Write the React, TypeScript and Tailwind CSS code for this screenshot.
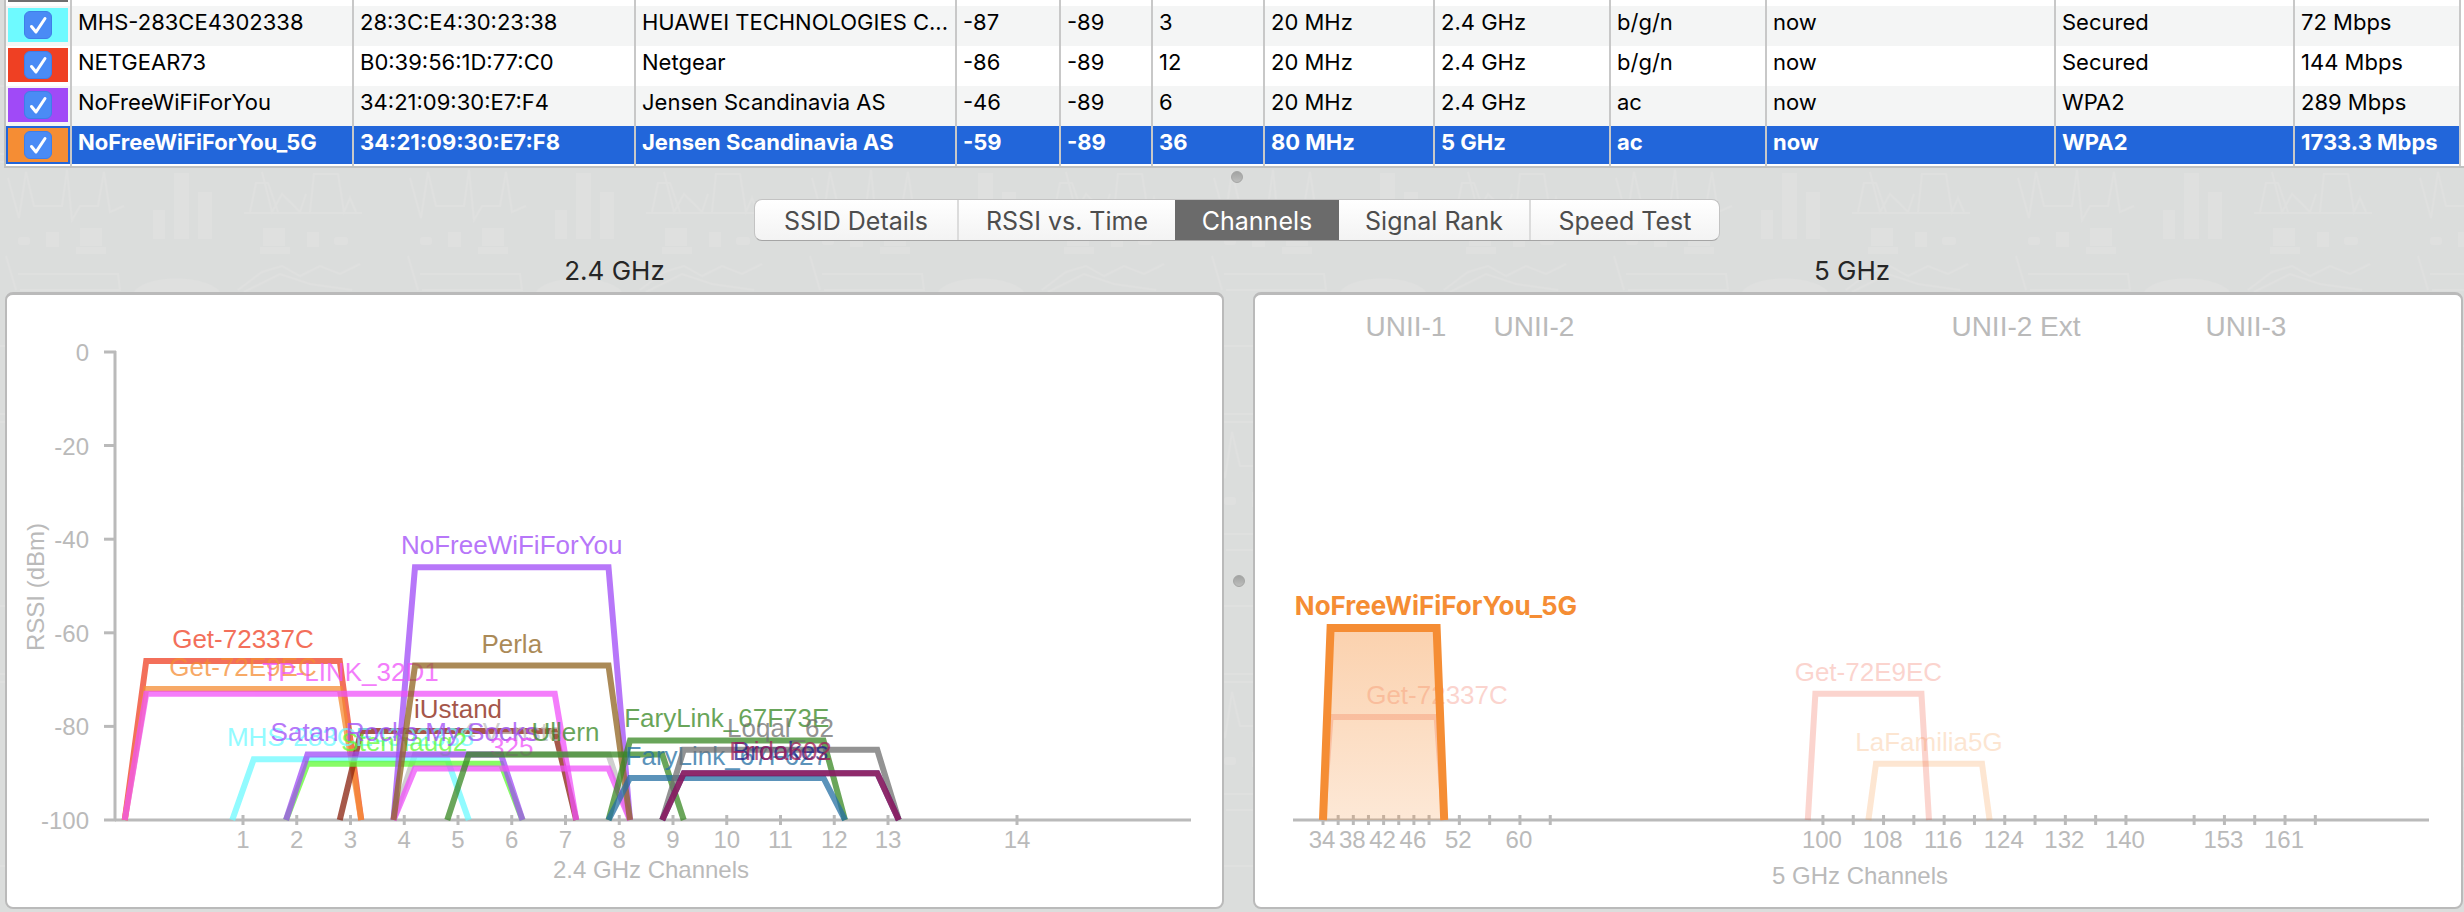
import { useState } from 'react'

interface Network {
  ssid: string
  bssid: string
  vendor: string
  signal: string
  noise: string
  channel: string
  width: string
  band: string
  mode: string
  seen: string
  security: string
  rate: string
  swatch: string
}

interface Trace {
  name: string
  channel: number
  span: number
  rssi: number
  color: string
}

const NETWORKS: Network[] = [
  { ssid: 'MHS-283CE4302338', bssid: '28:3C:E4:30:23:38', vendor: 'HUAWEI TECHNOLOGIES C...', signal: '-87', noise: '-89', channel: '3', width: '20 MHz', band: '2.4 GHz', mode: 'b/g/n', seen: 'now', security: 'Secured', rate: '72 Mbps', swatch: 'bg-[#6efaff]' },
  { ssid: 'NETGEAR73', bssid: 'B0:39:56:1D:77:C0', vendor: 'Netgear', signal: '-86', noise: '-89', channel: '12', width: '20 MHz', band: '2.4 GHz', mode: 'b/g/n', seen: 'now', security: 'Secured', rate: '144 Mbps', swatch: 'bg-[#ef4023]' },
  { ssid: 'NoFreeWiFiForYou', bssid: '34:21:09:30:E7:F4', vendor: 'Jensen Scandinavia AS', signal: '-46', noise: '-89', channel: '6', width: '20 MHz', band: '2.4 GHz', mode: 'ac', seen: 'now', security: 'WPA2', rate: '289 Mbps', swatch: 'bg-[#a04af7]' },
  { ssid: 'NoFreeWiFiForYou_5G', bssid: '34:21:09:30:E7:F8', vendor: 'Jensen Scandinavia AS', signal: '-59', noise: '-89', channel: '36', width: '80 MHz', band: '5 GHz', mode: 'ac', seen: 'now', security: 'WPA2', rate: '1733.3 Mbps', swatch: 'bg-[#f58d34]' },
]

const COLUMNS = [
  'w-[66px]',
  'w-[282px]',
  'w-[282px]',
  'w-[321px]',
  'w-[104px]',
  'w-[92px]',
  'w-[112px]',
  'w-[170px]',
  'w-[176px]',
  'w-[156px]',
  'w-[289px]',
  'w-[239px]',
  'w-[166px]',
]

const TABS = [
  { label: 'SSID Details', width: 'w-[202px]' },
  { label: 'RSSI vs. Time', width: 'w-[218px]' },
  { label: 'Channels', width: 'w-[164px]' },
  { label: 'Signal Rank', width: 'w-[190px]' },
  { label: 'Speed Test', width: 'w-[190px]' },
]

// Drawn in order, later traces on top
const TRACES_24: Trace[] = [
  { name: 'Get-72337C', channel: 1, span: 4, rssi: -66, color: '#ef4023' },
  { name: 'Get-72E9EC', channel: 1, span: 4, rssi: -72, color: '#f58d34' },
  { name: 'iUstand', channel: 5, span: 4, rssi: -81, color: '#88200c' },
  { name: '4 Venste', channel: 6, span: 4, rssi: -86, color: '#bfbfbf' },
  { name: 'MHS-283CE4302338', channel: 3, span: 4, rssi: -87, color: '#6efaff' },
  { name: 'Stenhaug2', channel: 4, span: 4, rssi: -88, color: '#60fa33' },
  { name: 'Satan Rocks My Socks', channel: 4, span: 4, rssi: -86, color: '#a04af7' },
  { name: 'NoFreeWiFiForYou', channel: 6, span: 4, rssi: -46, color: '#a04af7' },
  { name: 'TP-LINK_32D1', channel: 3, span: 8, rssi: -73, color: '#f052fa' },
  { name: '325', channel: 6, span: 4, rssi: -89, color: '#f052fa' },
  { name: 'Perla', channel: 6, span: 4, rssi: -67, color: '#906420' },
  { name: 'Ullern', channel: 7, span: 4, rssi: -86, color: '#388823' },
  { name: 'FaryLink_67F73E', channel: 10, span: 4, rssi: -83, color: '#388823' },
  { name: 'FaryLink_67F627', channel: 10, span: 4, rssi: -91, color: '#2570a4' },
  { name: 'Loqal_62', channel: 11, span: 4, rssi: -85, color: '#6f6f6f' },
  { name: 'Brookes', channel: 11, span: 4, rssi: -90, color: '#1d1d8a' },
  { name: 'Frida602', channel: 11, span: 4, rssi: -90, color: '#a21c58' },
]

const TRACES_5: Trace[] = [
  { name: 'Get-72337C', channel: 42, span: 15, rssi: -78, color: '#ef4023' },
  { name: 'LaFamilia5G', channel: 114, span: 15, rssi: -88, color: '#f58d34' },
  { name: 'Get-72E9EC', channel: 106, span: 15, rssi: -73, color: '#ef4023' },
]

const TICKS_5 = [34, 36, 38, 40, 42, 44, 46, 48, 52, 56, 60, 64, 100, 104, 108, 112, 116, 120, 124, 128, 132, 136, 140, 149, 153, 157, 161, 165]
const LABELS_5 = [34, 38, 42, 46, 52, 60, 100, 108, 116, 124, 132, 140, 153, 161]

const AXIS = '#bababa'
const BASE = 525

const rssiY = (rssi: number) => 57 - rssi * 4.68
const x24 = (channel: number) => (channel === 14 ? 1010 : 236 + (channel - 1) * 53.75)
const x5 = (channel: number) => 68 + (channel - 34) * 7.575

const tracePoints = (x: (channel: number) => number, { channel, span, rssi }: Trace, slope: number) => {
  const y = rssiY(rssi)
  const half = span / 2
  return [
    [x(channel - half - slope), BASE],
    [x(channel - half + slope), y],
    [x(channel + half - slope), y],
    [x(channel + half + slope), BASE],
  ]
    .map((p) => p.join(','))
    .join(' ')
}

function Backdrop() {
  return (
    <svg className="absolute inset-0 w-full h-full" aria-hidden="true">
      <defs>
        <pattern id="doodles" y="168" width="402" height="260" patternUnits="userSpaceOnUse">
          <g fill="#dfe0df">
            <rect x="153" y="42" width="12" height="29" />
            <rect x="174" y="5" width="15" height="66" />
            <rect x="198" y="24" width="14" height="47" />
            <rect x="18" y="69" width="12" height="8" rx="3" />
            <rect x="46" y="64" width="13" height="15" />
            <rect x="80" y="60" width="22" height="18" />
            <rect x="76" y="79" width="30" height="7" />
            <rect x="263" y="60" width="22" height="18" />
            <rect x="260" y="79" width="30" height="7" />
            <rect x="307" y="64" width="12" height="15" />
            <rect x="334" y="69" width="14" height="8" rx="3" />
            <path d="M134 124 C146 106 206 106 220 124 Z" />
          </g>
          <g fill="none" stroke="#dfe0df" strokeWidth="2">
            <path d="M8 10 L14 32 L19 50 L26 4 L34 38 L62 38 L67 2 L72 52 L80 38 L98 38 L104 4 L110 44 L124 38" />
            <path d="M244 45 H362 M250 44 L256 15 H268 L278 44 M262 4 L272 44 L282 26 L300 44 L306 26 M310 44 L314 6 H338 L344 44 L350 30 L356 44" />
            <path d="M6 88 L16 122 M18 106 H118 L120 122 H20" />
            <path d="M238 122 L262 104 L282 98 L300 108 L320 98 L340 106 L360 96 M244 124 L280 106 L310 116 L352 122" />
            <path d="M0 178 H402 M0 246 H402 M0 254 H402" />
          </g>
        </pattern>
      </defs>
      <rect width="100%" height="100%" fill="url(#doodles)" />
    </svg>
  )
}

function NetworkRow({ network, index, selected }: { network: Network; index: number; selected: boolean }) {
  const [checked, setChecked] = useState(true)
  const cells = [
    network.ssid,
    network.bssid,
    network.vendor,
    network.signal,
    network.noise,
    network.channel,
    network.width,
    network.band,
    network.mode,
    network.seen,
    network.security,
    network.rate,
  ]

  return (
    <tr
      className={
        selected ? 'bg-[#2266da] text-white font-bold' : index % 2 === 0 ? 'bg-[#f4f5f5] text-black' : 'bg-white text-black'
      }
    >
      <td className="p-0 pt-0.5 align-top border-r-2 border-[#c8c8c8]">
        <label className={`mx-0.5 h-[34px] flex items-center justify-center ${network.swatch}`}>
          <input
            type="checkbox"
            checked={checked}
            onChange={() => setChecked(!checked)}
            aria-label={`Show ${network.ssid}`}
            className="peer appearance-none w-7 h-7 rounded-md bg-white border border-[#3f7ee8] checked:bg-[#4a8bf5]"
          />
          <svg viewBox="0 0 28 28" className="absolute w-7 h-7 hidden peer-checked:block pointer-events-none">
            <path d="M7.500 15.500 L12 21 L21 7.500" fill="none" stroke="#fff" strokeWidth="3" strokeLinecap="round" strokeLinejoin="round" />
          </svg>
        </label>
      </td>
      {cells.map((cell, i) => (
        <td
          key={i}
          className={`p-0 pl-1.5 align-top border-r-2 border-[#c8c8c8] whitespace-nowrap ${selected ? 'h-[38px]' : 'h-10'}`}
        >
          {cell}
        </td>
      ))}
    </tr>
  )
}

function NetworkTable() {
  return (
    <div className="relative ml-1 border-l-2 border-b-2 border-[#c0c1c0] bg-white pr-1">
      <table className="w-full table-fixed border-separate border-spacing-0 text-[22px] leading-8">
        <colgroup>
          {COLUMNS.map((width, i) => (
            <col key={i} className={width} />
          ))}
        </colgroup>
        <tbody>
          <tr className="bg-white">
            {COLUMNS.map((_, i) => (
              <td key={i} className="p-0 h-1.5 align-top border-r-2 border-[#c8c8c8]">
                {i === 0 && <div className="mx-0.5 h-0.5 bg-[#6f6f6f]" />}
              </td>
            ))}
          </tr>
          {NETWORKS.map((network, i) => (
            <NetworkRow key={network.ssid} network={network} index={i} selected={i === 3} />
          ))}
          <tr className="bg-white">
            {COLUMNS.map((_, i) => (
              <td key={i} className="p-0 h-0.5 border-r-2 border-[#c8c8c8]" />
            ))}
          </tr>
        </tbody>
      </table>
    </div>
  )
}

function Knob() {
  return <div className="w-3 h-3 rounded-full bg-gradient-to-b from-[#a2a3a2] to-[#bcbdbc] border border-[#a4a5a4]" />
}

function Chart24() {
  return (
    <svg viewBox="0 0 1215 612" className="block w-full h-auto" role="img" aria-label="2.4 GHz channels">
      <g stroke={AXIS} strokeWidth="3" fill="none">
        <path d={`M108 56 V${BASE}`} />
        {[0, -20, -40, -60, -80, -100].map((r) => (
          <path key={r} d={`M97 ${rssiY(r)} H109`} />
        ))}
        <path d={`M108 ${BASE} H1184`} />
        {Array.from({ length: 14 }, (_, i) => (
          <path key={i} d={`M${x24(i + 1)} 520 V530`} />
        ))}
      </g>
      <g fill={AXIS} fontSize="24">
        {[0, -20, -40, -60, -80, -100].map((r) => (
          <text key={r} x="82" y={rssiY(r) + 9} textAnchor="end">
            {r}
          </text>
        ))}
        {Array.from({ length: 14 }, (_, i) => (
          <text key={i} x={x24(i + 1)} y="553" textAnchor="middle">
            {i + 1}
          </text>
        ))}
        <text x="644" y="583" textAnchor="middle">
          2.4 GHz Channels
        </text>
        <text transform="translate(37 292) rotate(-90)" textAnchor="middle">
          RSSI (dBm)
        </text>
      </g>
      {TRACES_24.map((trace) => (
        <g key={trace.name} opacity="0.75">
          <polyline points={tracePoints(x24, trace, 0.2)} fill="none" stroke={trace.color} strokeWidth="6" />
          <text x={x24(trace.channel)} y={rssiY(trace.rssi) - 13} fill={trace.color} fontSize="26" textAnchor="middle">
            {trace.name}
          </text>
        </g>
      ))}
    </svg>
  )
}

function Chart5() {
  const selected: Trace = { name: 'NoFreeWiFiForYou_5G', channel: 42, span: 15, rssi: -59, color: '#f58d34' }

  return (
    <svg viewBox="0 0 1206 612" className="block w-full h-auto" role="img" aria-label="5 GHz channels">
      <defs>
        <linearGradient id="selectedFill" x1="0" y1="0" x2="0" y2="1">
          <stop offset="0" stopColor="#f58d34" stopOpacity="0.4" />
          <stop offset="1" stopColor="#f58d34" stopOpacity="0.2" />
        </linearGradient>
      </defs>
      <g fill={AXIS} fontSize="28" textAnchor="middle">
        <text x="151" y="41">UNII-1</text>
        <text x="279" y="41">UNII-2</text>
        <text x="761" y="41">UNII-2 Ext</text>
        <text x="991" y="41">UNII-3</text>
      </g>
      <g stroke={AXIS} strokeWidth="3">
        <path d={`M38 ${BASE} H1174`} />
        {TICKS_5.map((c) => (
          <path key={c} d={`M${x5(c)} 520 V530`} />
        ))}
      </g>
      <g fill={AXIS} fontSize="24" textAnchor="middle">
        {LABELS_5.map((c) => (
          <text key={c} x={x5(c) - 1} y="553">
            {c}
          </text>
        ))}
        <text x="605" y="589">5 GHz Channels</text>
      </g>
      {TRACES_5.map((trace) => (
        <g key={trace.name} opacity="0.22">
          <polyline points={tracePoints(x5, trace, 0.5)} fill="none" stroke={trace.color} strokeWidth="6" />
          <text
            x={trace.channel === 42 ? 182 : x5(trace.channel)}
            y={rssiY(trace.rssi) - 13}
            fill={trace.color}
            fontSize="26"
            textAnchor="middle"
          >
            {trace.name}
          </text>
        </g>
      ))}
      <polyline points={tracePoints(x5, selected, 0.5)} fill="url(#selectedFill)" stroke={selected.color} strokeWidth="8" />
      <text x="181" y={rssiY(selected.rssi) - 13} fill={selected.color} className="font-['Inter'] font-bold" fontSize="26" textAnchor="middle">
        {selected.name}
      </text>
    </svg>
  )
}

export default function App() {
  const [activeTab, setActiveTab] = useState('Channels')

  return (
    <div className="relative min-h-screen bg-[#dbdddc] font-['Inter','Liberation_Sans',sans-serif]">
      <Backdrop />
      <NetworkTable />

      <div className="relative flex flex-col items-center pl-2.5 pt-[3px]">
        <Knob />
        <div className="mt-4 h-[42px] flex rounded-lg border border-[#c3c3c3] border-b-[#a5a5a5] bg-gradient-to-b from-white to-[#f3f3f3] overflow-hidden">
          {TABS.map(({ label, width }, i) => (
            <button
              key={label}
              onClick={() => setActiveTab(label)}
              className={`${width} text-[25px] leading-[42px] whitespace-nowrap ${
                activeTab === label ? 'bg-[#6b6b6b] text-white' : 'text-[#4d4d4d]'
              } ${i === 1 || i === 4 ? 'border-l-2 border-[#dcdcdc]' : ''}`}
            >
              {label}
            </button>
          ))}
        </div>
      </div>

      {/* Band charts */}
      <div className="relative grid grid-cols-[1219fr_29px_1210fr] pl-[5px] pr-px pb-[3px]">
        <h2 className="pt-2 text-[26px] leading-[43px] text-center text-[#262626]">2.4 GHz</h2>
        <div />
        <h2 className="pt-2 pr-3 text-[26px] leading-[43px] text-center text-[#262626]">5 GHz</h2>

        <section className="border-2 border-t-3 border-[#bababa] rounded-lg bg-white overflow-hidden font-['Liberation_Sans',sans-serif]">
          <Chart24 />
        </section>
        <div className="flex items-center justify-center pb-10">
          <Knob />
        </div>
        <section className="border-2 border-t-3 border-[#bababa] rounded-lg bg-white overflow-hidden font-['Liberation_Sans',sans-serif]">
          <Chart5 />
        </section>
      </div>
    </div>
  )
}
